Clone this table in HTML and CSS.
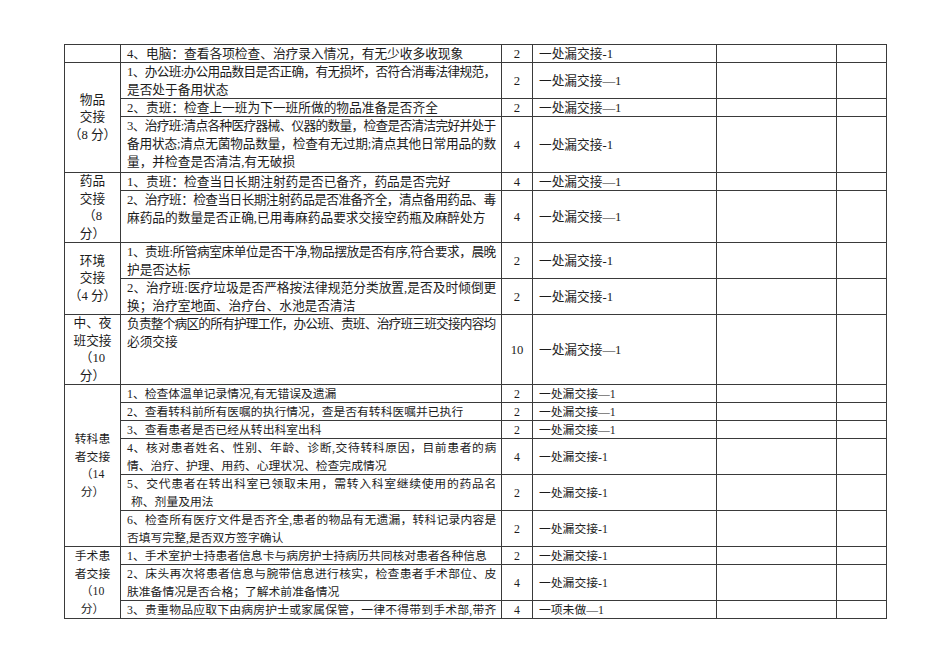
FILE: index.html
```html
<!DOCTYPE html>
<html lang="zh-CN">
<head>
<meta charset="utf-8">
<title>交接班考核表</title>
<link rel="stylesheet" href="styles.css">
</head>
<body>
<table class="sheet">
  <colgroup>
    <col class="c-cat">
    <col class="c-txt">
    <col class="c-sc">
    <col class="c-dd">
    <col class="c-e1">
    <col class="c-e2">
  </colgroup>
  <tbody>
    <tr class="h17">
      <td class="cat"></td>
      <td class="txt"><span class="ln">4、电脑：查看各项检查、治疗录入情况，有无少收多收现象</span></td>
      <td class="sc">2</td>
      <td class="dd">一处漏交接-1</td>
      <td></td><td></td>
    </tr>
    <tr class="h35">
      <td class="cat" rowspan="3"><span class="cl">物品</span><span class="cl">交接</span><span class="cl">（8 分）</span></td>
      <td class="txt"><span class="ln jl">1、办公班:办公用品数目是否正确，有无损坏，否符合消毒法律规范，</span><span class="ln">是否处于备用状态</span></td>
      <td class="sc">2</td>
      <td class="dd">一处漏交接—1</td>
      <td></td><td></td>
    </tr>
    <tr class="h17">
      <td class="txt"><span class="ln">2、责班：检查上一班为下一班所做的物品准备是否齐全</span></td>
      <td class="sc">2</td>
      <td class="dd">一处漏交接—1</td>
      <td></td><td></td>
    </tr>
    <tr class="h56">
      <td class="txt"><span class="ln jl">3、治疗班:清点各种医疗器械、仪器的数量，检查是否清洁完好并处于</span><span class="ln jl">备用状态;清点无菌物品数量，检查有无过期;清点其他日常用品的数</span><span class="ln">量，并检查是否清洁,有无破损</span></td>
      <td class="sc">4</td>
      <td class="dd">一处漏交接-1</td>
      <td></td><td></td>
    </tr>
    <tr class="h16">
      <td class="cat" rowspan="2"><span class="cl">药品</span><span class="cl">交接</span><span class="cl">（8</span><span class="cl">分）</span></td>
      <td class="txt"><span class="ln">1、责班：检查当日长期注射药是否已备齐，药品是否完好</span></td>
      <td class="sc">4</td>
      <td class="dd">一处漏交接—1</td>
      <td></td><td></td>
    </tr>
    <tr class="h51">
      <td class="txt"><span class="ln jl">2、治疗班：检查当日长期注射药品是否准备齐全，清点备用药品、毒</span><span class="ln">麻药品的数量是否正确,已用毒麻药品要求交接空药瓶及麻醉处方</span></td>
      <td class="sc">4</td>
      <td class="dd">一处漏交接—1</td>
      <td></td><td></td>
    </tr>
    <tr class="h34">
      <td class="cat" rowspan="2"><span class="cl">环境</span><span class="cl">交接</span><span class="cl">（4 分）</span></td>
      <td class="txt"><span class="ln jl">1、责班:所管病室床单位是否干净,物品摆放是否有序,符合要求，晨晚</span><span class="ln">护是否达标</span></td>
      <td class="sc">2</td>
      <td class="dd">一处漏交接-1</td>
      <td></td><td></td>
    </tr>
    <tr class="h35 soft">
      <td class="txt"><span class="ln jl">2、治疗班:医疗垃圾是否严格按法律规范分类放置,是否及时倾倒更</span><span class="ln">换；治疗室地面、治疗台、水池是否清洁</span></td>
      <td class="sc">2</td>
      <td class="dd">一处漏交接-1</td>
      <td></td><td></td>
    </tr>
    <tr class="h70">
      <td class="cat"><span class="cl">中、夜</span><span class="cl">班交接</span><span class="cl">（10</span><span class="cl">分）</span></td>
      <td class="txt"><span class="ln jl">负责整个病区的所有护理工作，办公班、责班、治疗班三班交接内容均</span><span class="ln">必须交接</span></td>
      <td class="sc">10</td>
      <td class="dd">一处漏交接—1</td>
      <td></td><td></td>
    </tr>
    <tr class="h17 sm">
      <td class="cat" rowspan="6"><span class="cl">转科患</span><span class="cl">者交接</span><span class="cl">（14</span><span class="cl">分）</span></td>
      <td class="txt"><span class="ln">1、检查体温单记录情况,有无错误及遗漏</span></td>
      <td class="sc">2</td>
      <td class="dd">一处漏交接—1</td>
      <td></td><td></td>
    </tr>
    <tr class="h17 sm soft">
      <td class="txt"><span class="ln">2、查看转科前所有医嘱的执行情况，查是否有转科医嘱并已执行</span></td>
      <td class="sc">2</td>
      <td class="dd">一处漏交接—1</td>
      <td></td><td></td>
    </tr>
    <tr class="h16 sm soft">
      <td class="txt"><span class="ln">3、查看患者是否已经从转出科室出科</span></td>
      <td class="sc">2</td>
      <td class="dd">一处漏交接—1</td>
      <td></td><td></td>
    </tr>
    <tr class="h34 sm">
      <td class="txt"><span class="ln jl">4、核对患者姓名、性别、年龄、诊断,交待转科原因，目前患者的病</span><span class="ln">情、治疗、护理、用药、心理状况、检查完成情况</span></td>
      <td class="sc">4</td>
      <td class="dd">一处漏交接-1</td>
      <td></td><td></td>
    </tr>
    <tr class="h34 sm soft">
      <td class="txt"><span class="ln jl">5、交代患者在转出科室已领取未用，需转入科室继续使用的药品名</span><span class="ln ind">称、剂量及用法</span></td>
      <td class="sc">2</td>
      <td class="dd">一处漏交接-1</td>
      <td></td><td></td>
    </tr>
    <tr class="h36 sm">
      <td class="txt"><span class="ln jl">6、检查所有医疗文件是否齐全,患者的物品有无遗漏，转科记录内容是</span><span class="ln">否填写完整,是否双方签字确认</span></td>
      <td class="sc">2</td>
      <td class="dd">一处漏交接-1</td>
      <td></td><td></td>
    </tr>
    <tr class="h16 sm">
      <td class="cat" rowspan="3"><span class="cl">手术患</span><span class="cl">者交接</span><span class="cl">（10</span><span class="cl">分）</span></td>
      <td class="txt"><span class="ln">1、手术室护士持患者信息卡与病房护士持病历共同核对患者各种信息</span></td>
      <td class="sc">2</td>
      <td class="dd">一处漏交接-1</td>
      <td></td><td></td>
    </tr>
    <tr class="h35 sm">
      <td class="txt"><span class="ln jl">2、床头再次将患者信息与腕带信息进行核实，检查患者手术部位、皮</span><span class="ln">肤准备情况是否合格；了解术前准备情况</span></td>
      <td class="sc">4</td>
      <td class="dd">一处漏交接-1</td>
      <td></td><td></td>
    </tr>
    <tr class="h17 sm">
      <td class="txt"><span class="ln jl">3、贵重物品应取下由病房护士或家属保管，一律不得带到手术部,带齐</span></td>
      <td class="sc">4</td>
      <td class="dd">一项未做—1</td>
      <td></td><td></td>
    </tr>
  </tbody>
</table>
</body>
</html>
```
FILE: styles.css
```css
html, body {
  margin: 0;
  background: #ffffff;
}
body {
  padding: 44px 0 0 64px;
  font-family: "Liberation Serif", "Noto Sans CJK SC", serif;
  font-size: 12.7px;
  color: #1c1c1c;
}
.sheet {
  border-collapse: collapse;
  table-layout: fixed;
  width: 823px;
}
.c-cat { width: 56px; }
.c-txt { width: 381px; }
.c-sc { width: 31px; }
.c-dd { width: 184px; }
.c-e1 { width: 120px; }
.c-e2 { width: 50px; }

.sheet td {
  border: 1px solid #3a3a3a;
  padding: 0;
  line-height: 12px;
  vertical-align: middle;
  white-space: nowrap;
}
.sheet tr.sm td {
  font-size: 11.8px;
}
.sheet td.cat {
  text-align: center;
  padding: 0 1px;
}
.cl {
  display: block;
  height: 17.5px;
  line-height: 17.5px;
}
.cl:last-child {
  height: 16.5px;
}
.sheet td.txt {
  vertical-align: top;
  padding: 0 6px;
}
.ln {
  display: block;
  height: 18px;
  line-height: 18px;
}
.ln:last-child {
  height: 17px;
}
.jl {
  letter-spacing: -1.3px;
  text-align: justify;
  text-align-last: justify;
}
.ind {
  padding-left: 4px;
}
.sheet td.sc {
  text-align: center;
}
.sheet td.dd {
  padding-left: 6px;
}
.soft td {
  border-top: 1px solid #8a8a8a;
}

.h16 { height: 16px; }
.h17 { height: 17px; }
.h34 { height: 34px; }
.h35 { height: 35px; }
.h36 { height: 36px; }
.h51 { height: 51px; }
.h56 { height: 56px; }
.h70 { height: 70px; }
```
